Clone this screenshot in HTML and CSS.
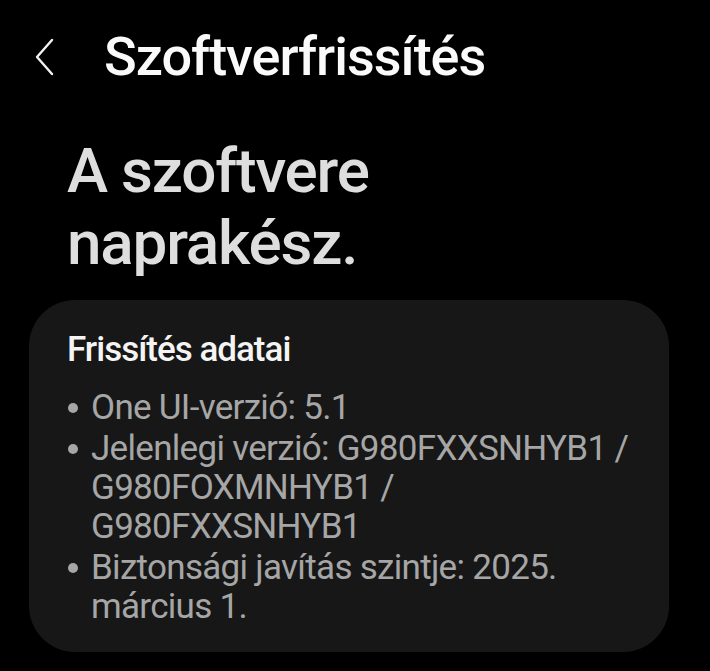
FILE: index.html
```html
<!DOCTYPE html>
<html lang="hu">
<head>
    <meta charset="UTF-8">
    <meta name="viewport" content="width=device-width, initial-scale=1.0">
    <title>Szoftverfrissítés</title>
    <link rel="stylesheet" href="styles.css">
</head>
<body>
    <div class="screen">
        <header class="app-bar">
            <button class="back" type="button" aria-label="Vissza">
                <svg width="20" height="38" viewBox="0 0 20 38">
                    <path d="M18 2 L3 19 L18 36" fill="none" stroke="#f2f2f2" stroke-width="2.4" stroke-linecap="round" stroke-linejoin="round"/>
                </svg>
            </button>
            <h1 class="app-title">Szoftverfrissítés</h1>
        </header>

        <h2 class="status">A szoftvere naprakész.</h2>

        <section class="card">
            <h3 class="card-title">Frissítés adatai</h3>
            <ul class="details">
                <li>One UI-verzió: 5.1</li>
                <li>Jelenlegi verzió: G980FXXSNHYB1&nbsp;/ G980FOXMNHYB1&nbsp;/ G980FXXSNHYB1</li>
                <li>Biztonsági javítás szintje: 2025. március 1.</li>
            </ul>
        </section>
    </div>
</body>
</html>
```

FILE: styles.css
```css
body {
    margin: 0;
    padding: 0;
    background: #000;
    font-family: Roboto, "Noto Sans", sans-serif;
    color: #fff;
}

.screen {
    width: 710px;
    height: 671px;
    overflow: hidden;
}

.app-bar {
    display: flex;
    align-items: center;
    padding: 26px 0 0 34px;
    height: 62px;
}

.back {
    display: flex;
    background: none;
    border: none;
    padding: 0;
    margin-right: 50px;
    cursor: pointer;
}

.app-title {
    margin: 0;
    font-size: 54px;
    line-height: 62px;
    font-weight: 500;
    letter-spacing: -1px;
    color: #fafafa;
}

.status {
    margin: 47px 0 0 67px;
    width: 360px;
    font-size: 62px;
    font-weight: 500;
    line-height: 72px;
    letter-spacing: -1.2px;
    color: #dedede;
}

.card {
    width: 564px;
    margin: 21px 0 0 29px;
    padding: 28px 38px 24px 38px;
    background: #171717;
    border-radius: 46px;
}

.card-title {
    margin: 0;
    font-size: 35px;
    line-height: 44px;
    font-weight: 500;
    letter-spacing: -1px;
    color: #f4f4f4;
}

.details {
    list-style: none;
    margin: 16px 0 0;
    padding: 0;
    width: 566px;
}

.details li {
    position: relative;
    padding-left: 24px;
    font-size: 35px;
    line-height: 39px;
    letter-spacing: -0.7px;
    color: #a6a6a6;
    margin-bottom: 2px;
}

.details li::before {
    content: "";
    position: absolute;
    left: 1px;
    top: 15px;
    width: 10px;
    height: 10px;
    border-radius: 50%;
    background: #a6a6a6;
}
```
